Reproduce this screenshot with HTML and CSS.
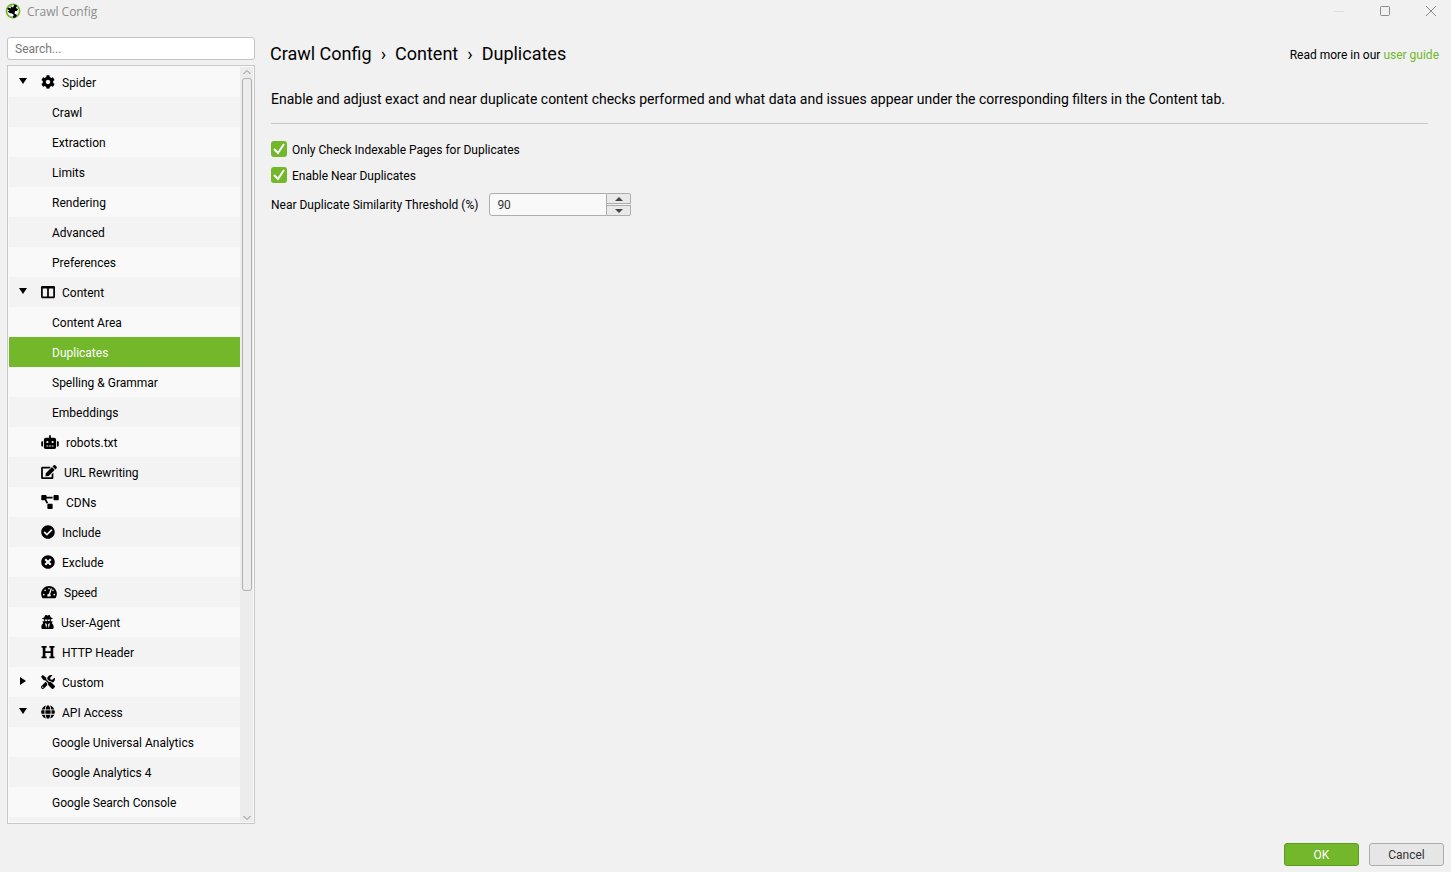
FILE: index.html
```html
<!DOCTYPE html>
<html lang="en">
<head>
  <meta charset="utf-8">
  <title>Crawl Config</title>
  <link rel="stylesheet" href="styles.css">
</head>
<body>
  <!-- title bar -->
  <header class="titlebar">
    <svg class="logo" viewBox="0 0 16 16">
      <circle cx="8" cy="8" r="6.6" fill="#fff" stroke="#6fb52c" stroke-width="1.6"/>
      <path d="M8 4.500L9.500 1.500 12 2.500 11 5 13 6 12 8 10 8 9.500 10.500 12 12 11 14 9 15 7.500 13.500 9 12 7 10.500 4.500 10 2.500 8.500 4.500 7.500 2 6 3.500 4.500 6 5.500 5.500 3z" fill="#000"/>
    </svg>
    <span class="window-title">Crawl Config</span>
    <div class="window-buttons">
      <button type="button" aria-label="Minimize" disabled><svg viewBox="0 0 12 12"><path d="M1 6.5h10"/></svg></button>
      <button type="button" aria-label="Maximize"><svg viewBox="0 0 12 12"><rect x="1.5" y="1.5" width="9" height="9" rx="1"/></svg></button>
      <button type="button" aria-label="Close"><svg viewBox="0 0 12 12"><path d="M1 1l10 10M11 1L1 11"/></svg></button>
    </div>
  </header>

  <div class="window">
    <!-- sidebar -->
    <nav class="sidebar">
      <input class="search" type="text" placeholder="Search..." aria-label="Search">
      <div class="tree">
        <ul class="tree-list">
          <li class="group open"><a href="#"><svg class="icon" viewBox="0 0 512 512"><path d="M487.4 315.7l-42.6-24.6c4.3-23.2 4.3-47 0-70.2l42.6-24.6c4.9-2.8 7.1-8.6 5.5-14-11.1-35.6-30-67.8-54.7-94.6-3.8-4.1-10-5.1-14.8-2.3L380.8 110c-17.9-15.4-38.5-27.3-60.8-35.1V25.8c0-5.6-3.9-10.5-9.4-11.7-36.7-8.2-74.3-7.8-109.2 0-5.5 1.2-9.4 6.1-9.4 11.7V75c-22.2 7.9-42.8 19.8-60.8 35.1L88.7 85.5c-4.9-2.8-11-1.9-14.8 2.3-24.7 26.7-43.6 58.9-54.7 94.6-1.7 5.4.6 11.2 5.5 14L67.3 221c-4.3 23.2-4.3 47 0 70.2l-42.6 24.6c-4.9 2.8-7.1 8.6-5.5 14 11.1 35.6 30 67.8 54.7 94.6 3.8 4.1 10 5.1 14.8 2.3l42.6-24.6c17.9 15.4 38.5 27.3 60.8 35.1v49.2c0 5.6 3.9 10.5 9.4 11.7 36.7 8.2 74.3 7.8 109.2 0 5.5-1.2 9.4-6.1 9.4-11.7v-49.2c22.2-7.9 42.8-19.8 60.8-35.1l42.6 24.6c4.9 2.8 11 1.9 14.8-2.3 24.7-26.7 43.6-58.9 54.7-94.6 1.5-5.5-.7-11.3-5.6-14.1zM256 336c-44.1 0-80-35.9-80-80s35.9-80 80-80 80 35.9 80 80-35.9 80-80 80z"/></svg>Spider</a></li>
          <li><a href="#">Crawl</a></li>
          <li><a href="#">Extraction</a></li>
          <li><a href="#">Limits</a></li>
          <li><a href="#">Rendering</a></li>
          <li><a href="#">Advanced</a></li>
          <li><a href="#">Preferences</a></li>
          <li class="group open"><a href="#"><svg class="icon" viewBox="0 0 512 512"><path d="M464 32H48C21.5 32 0 53.5 0 80v352c0 26.5 21.5 48 48 48h416c26.5 0 48-21.5 48-48V80c0-26.5-21.5-48-48-48zM224 416H64V128h160v288zm224 0H288V128h160v288z"/></svg>Content</a></li>
          <li><a href="#">Content Area</a></li>
          <li class="selected"><a href="#">Duplicates</a></li>
          <li><a href="#">Spelling &amp; Grammar</a></li>
          <li><a href="#">Embeddings</a></li>
          <li class="group"><a href="#"><svg class="icon icon-xl" viewBox="0 0 640 512"><path d="M32 224h32v192H32a32 32 0 0 1-32-32V256a32 32 0 0 1 32-32zm512-48v272a64 64 0 0 1-64 64H160a64 64 0 0 1-64-64V176a80 80 0 0 1 80-80h112V32a32 32 0 0 1 64 0v64h112a80 80 0 0 1 80 80zM264 256a40 40 0 1 0-40 40 40 40 0 0 0 40-40zm-8 128h-64v32h64zm96 0h-64v32h64zm104-128a40 40 0 1 0-40 40 40 40 0 0 0 40-40zm-8 128h-64v32h64zm192-128v128a32 32 0 0 1-32 32h-32V224h32a32 32 0 0 1 32 32z"/></svg>robots.txt</a></li>
          <li class="group"><a href="#"><svg class="icon icon-lg" viewBox="0 0 576 512"><path d="M402.6 83.2l90.2 90.2c3.8 3.8 3.8 10 0 13.8L274.4 405.6l-92.8 10.3c-12.4 1.4-22.9-9.1-21.5-21.5l10.3-92.8L388.8 83.2c3.8-3.8 10-3.8 13.8 0zm162-22.9l-48.8-48.8c-15.2-15.2-39.9-15.2-55.2 0l-35.4 35.4c-3.8 3.8-3.8 10 0 13.8l90.2 90.2c3.8 3.8 10 3.8 13.8 0l35.4-35.4c15.2-15.3 15.2-40 0-55.2zM384 346.2V448H64V128h229.8c3.2 0 6.2-1.3 8.5-3.5l40-40c7.6-7.6 2.2-20.5-8.5-20.5H48C21.5 64 0 85.5 0 112v352c0 26.5 21.5 48 48 48h352c26.5 0 48-21.5 48-48V306.2c0-10.7-12.9-16-20.5-8.5l-40 40c-2.2 2.3-3.5 5.3-3.5 8.5z"/></svg>URL Rewriting</a></li>
          <li class="group"><a href="#"><svg class="icon icon-xl" viewBox="0 0 640 512"><path d="M384 320H256c-17.7 0-32 14.3-32 32v128c0 17.7 14.3 32 32 32h128c17.7 0 32-14.3 32-32V352c0-17.7-14.3-32-32-32zM192 32c0-17.7-14.3-32-32-32H32C14.3 0 0 14.3 0 32v128c0 17.7 14.3 32 32 32h95.7l73.2 128C212 301 232.4 288 256 288h.3L192 175.5V128h224V64H192V32zM608 0H480c-17.7 0-32 14.3-32 32v128c0 17.7 14.3 32 32 32h128c17.7 0 32-14.3 32-32V32c0-17.7-14.3-32-32-32z"/></svg>CDNs</a></li>
          <li class="group"><a href="#"><svg class="icon" viewBox="0 0 512 512"><path d="M504 256c0 137-111 248-248 248S8 393 8 256 119 8 256 8s248 111 248 248zM227.3 387.3l184-184c6.2-6.2 6.2-16.4 0-22.6l-22.6-22.6c-6.3-6.3-16.4-6.3-22.6 0L216 308.1l-70.1-70.1c-6.2-6.2-16.4-6.2-22.6 0l-22.6 22.6c-6.3 6.3-6.3 16.4 0 22.7l104 104c6.2 6.2 16.4 6.2 22.6 0z"/></svg>Include</a></li>
          <li class="group"><a href="#"><svg class="icon" viewBox="0 0 512 512"><path d="M256 8C119 8 8 119 8 256s111 248 248 248 248-111 248-248S393 8 256 8zm121.6 313.1c4.7 4.7 4.7 12.3 0 17L338 377.6c-4.7 4.7-12.3 4.7-17 0L256 312l-65.1 65.6c-4.7 4.7-12.3 4.7-17 0L134.4 338c-4.7-4.7-4.7-12.3 0-17l65.6-65-65.6-65.1c-4.7-4.7-4.7-12.3 0-17l39.6-39.6c4.7-4.7 12.3-4.7 17 0l65 65.7 65.1-65.6c4.7-4.7 12.3-4.7 17 0l39.6 39.6c4.7 4.7 4.7 12.3 0 17L312 256l65.6 65.1z"/></svg>Exclude</a></li>
          <li class="group"><a href="#"><svg class="icon icon-lg" viewBox="0 0 576 512"><path d="M288 32C128.9 32 0 160.9 0 320c0 52.8 14.3 102.3 39.1 144.8 5.6 9.6 16.3 15.2 27.4 15.2h443c11.1 0 21.8-5.6 27.4-15.2C561.8 422.3 576 372.8 576 320c0-159.1-128.9-288-288-288zm0 64c14.7 0 26.6 10.1 30.3 23.7-1.1 2.3-2.6 4.2-3.5 6.7l-9.2 27.7c-5.1 3.5-11 6-17.6 6-17.7 0-32-14.3-32-32S270.3 96 288 96zM96 384c-17.7 0-32-14.3-32-32s14.3-32 32-32 32 14.3 32 32-14.3 32-32 32zm48-160c-17.7 0-32-14.3-32-32s14.3-32 32-32 32 14.3 32 32-14.3 32-32 32zm246.8-72.4l-61.3 184C343.1 347.3 352 364.5 352 384c0 11.7-3.4 22.6-8.9 32H232.9c-5.5-9.5-8.9-20.3-8.9-32 0-33.9 26.5-61.4 59.9-63.6l61.3-184c4.2-12.6 17.7-19.5 30.4-15.2 12.6 4.2 19.4 17.8 15.2 30.4zm14.6 57.2l15.5-46.6c3.5-1.3 7.1-2.2 11.1-2.2 17.7 0 32 14.3 32 32s-14.3 32-32 32c-11.4 0-20.9-6.3-26.6-15.2zM480 384c-17.7 0-32-14.3-32-32s14.3-32 32-32 32 14.3 32 32-14.3 32-32 32z"/></svg>Speed</a></li>
          <li class="group"><a href="#"><svg class="icon icon-sm" viewBox="0 0 448 512"><path d="M383.9 308.3l23.9-62.6c4-10.5-3.7-21.7-15-21.7h-58.5c11-18.9 17.8-40.6 17.8-64v-.3c39.2-7.8 64-19.1 64-31.7 0-13.3-27.3-25.1-70.1-33-9.2-32.8-27-65.8-40.6-82.8-9.5-11.9-25.9-15.6-39.5-8.8l-27.6 13.8c-9 4.5-19.6 4.5-28.6 0L182.1 3.4c-13.6-6.8-30-3.1-39.5 8.8-13.5 17-31.4 50-40.6 82.8-42.7 7.9-70 19.7-70 33 0 12.6 24.8 23.9 64 31.7v.3c0 23.4 6.8 45.1 17.8 64H56.3c-11.5 0-19.2 11.7-14.7 22.3l25.8 60.2C27.3 329.8 0 372.7 0 422.4v44.8C0 491.9 20.1 512 44.8 512h358.4c24.7 0 44.8-20.1 44.8-44.8v-44.8c0-48.4-25.8-90.4-64.1-114.1zM176 480l-41.6-192 49.6 32 24 40-32 120zm96 0l-32-120 24-40 49.6-32L272 480zm41.7-298.5c-3.9 11.9-7 24.6-16.5 33.4-10.1 9.3-48 22.4-64-25-2.8-8.4-15.4-8.4-18.3 0-17 50.2-56 32.4-64 25-9.5-8.8-12.7-21.5-16.5-33.4-.8-2.5-6.3-5.7-6.3-5.8v-10.8c28.3 3.6 61 5.8 96 5.8s67.7-2.1 96-5.8v10.8c-.1.1-5.6 3.2-6.4 5.8z"/></svg>User-Agent</a></li>
          <li class="group"><a href="#"><svg class="icon" viewBox="0 0 512 512"><path d="M448 96v320h32a16 16 0 0 1 16 16v32a16 16 0 0 1-16 16H320a16 16 0 0 1-16-16v-32a16 16 0 0 1 16-16h32V288H160v128h32a16 16 0 0 1 16 16v32a16 16 0 0 1-16 16H32a16 16 0 0 1-16-16v-32a16 16 0 0 1 16-16h32V96H32a16 16 0 0 1-16-16V48a16 16 0 0 1 16-16h160a16 16 0 0 1 16 16v32a16 16 0 0 1-16 16h-32v128h192V96h-32a16 16 0 0 1-16-16V48a16 16 0 0 1 16-16h160a16 16 0 0 1 16 16v32a16 16 0 0 1-16 16z"/></svg>HTTP Header</a></li>
          <li class="group closed"><a href="#"><svg class="icon" viewBox="0 0 512 512"><path d="M501.1 395.7L384 278.6c-23.1-23.1-57.6-27.6-85.4-13.9L192 158.1V96L64 0 0 64l96 128h62.1l106.6 106.6c-13.6 27.8-9.2 62.3 13.9 85.4l117.1 117.1c14.6 14.6 38.2 14.6 52.7 0l52.7-52.7c14.5-14.6 14.5-38.2 0-52.7zM331.7 225c28.3 0 54.9 11 74.9 31l19.4 19.4c15.8-6.9 30.8-16.5 43.8-29.5 37.1-37.1 49.7-89.3 37.9-136.7-2.2-9-13.5-12.1-20.1-5.5l-74.4 74.4-67.9-11.3L334 98.9l74.4-74.4c6.6-6.6 3.4-17.9-5.7-20.2-47.4-11.7-99.6.9-136.6 37.9-28.5 28.5-41.9 66.1-41.2 103.6l82.1 82.1c8.1-1.9 16.5-2.9 24.7-2.9zm-103.9 82l-56.7-56.7L18.7 402.8c-25 25-25 65.5 0 90.5s65.5 25 90.5 0l123.6-123.6c-7.6-19.9-9.9-41.6-5-62.7zM64 472c-13.2 0-24-10.8-24-24 0-13.3 10.7-24 24-24s24 10.7 24 24c0 13.2-10.7 24-24 24z"/></svg>Custom</a></li>
          <li class="group open"><a href="#"><svg class="icon" viewBox="0 0 496 512"><path d="M336.5 160C322 70.7 287.8 8 248 8s-74 62.7-88.5 152h177zM152 256c0 22.2 1.2 43.5 3.3 64h185.3c2.1-20.5 3.3-41.8 3.3-64s-1.2-43.5-3.3-64H155.3c-2.1 20.5-3.3 41.8-3.3 64zm324.7-96c-28.6-67.9-86.5-120.4-158-141.6 24.4 33.8 41.2 84.7 50 141.6h108zM177.2 18.4C105.8 39.6 47.8 92.1 19.3 160h108c8.7-56.9 25.5-107.8 49.9-141.6zM487.4 192H372.7c2.1 21 3.3 42.5 3.3 64s-1.2 43-3.3 64h114.6c5.5-20.5 8.6-41.8 8.6-64s-3.1-43.5-8.5-64zM120 256c0-21.5 1.2-43 3.3-64H8.6C3.2 212.5 0 233.8 0 256s3.2 43.5 8.6 64h114.6c-2-21-3.2-42.5-3.2-64zm39.5 96c14.5 89.3 48.7 152 88.5 152s74-62.7 88.5-152h-177zm159.3 141.6c71.4-21.2 129.4-73.7 158-141.6h-108c-8.8 56.9-25.6 107.8-50 141.6zM19.3 352c28.6 67.9 86.5 120.4 158 141.6-24.4-33.8-41.2-84.7-50-141.6h-108z"/></svg>API Access</a></li>
          <li><a href="#">Google Universal Analytics</a></li>
          <li><a href="#">Google Analytics 4</a></li>
          <li><a href="#">Google Search Console</a></li>
          <li></li>
        </ul>
        <div class="scrollbar">
          <svg class="scroll-arrow" viewBox="0 0 10 10"><path d="M1.500 6.500l3.500-3.500 3.500 3.500"/></svg>
          <div class="scroll-track"><div class="scroll-thumb"></div></div>
          <svg class="scroll-arrow" viewBox="0 0 10 10"><path d="M1.500 4.500l3.500 3.500 3.500-3.500"/></svg>
        </div>
      </div>
    </nav>

    <!-- settings panel -->
    <main class="content">
      <div class="content-header">
        <h1><span>Crawl Config</span><span>›</span><span>Content</span><span>›</span><span>Duplicates</span></h1>
        <p class="guide">Read more in our <a href="#">user guide</a></p>
      </div>
      <p class="description">Enable and adjust exact and near duplicate content checks performed and what data and issues appear under the corresponding filters in the Content tab.</p>
      <form class="options">
        <label class="check"><input type="checkbox" checked>Only Check Indexable Pages for Duplicates</label>
        <label class="check"><input type="checkbox" checked>Enable Near Duplicates</label>
        <div class="threshold">
          <label for="threshold">Near Duplicate Similarity Threshold (%)</label>
          <div class="spinner">
            <input id="threshold" type="text" value="90">
            <div class="spin-buttons">
              <button type="button" aria-label="Increase"><svg viewBox="0 0 8 4"><path d="M0 4l4-4 4 4z"/></svg></button>
              <button type="button" aria-label="Decrease"><svg viewBox="0 0 8 4"><path d="M0 0l4 4 4-4z"/></svg></button>
            </div>
          </div>
        </div>
      </form>
    </main>
  </div>

  <footer class="actions">
    <button type="button" class="btn btn-ok">OK</button>
    <button type="button" class="btn">Cancel</button>
  </footer>
</body>
</html>
```
FILE: styles.css
```css
* {
  box-sizing: border-box;
}

body {
  margin: 0;
  height: 100vh;
  display: flex;
  flex-direction: column;
  background-color: #f1f1f1;
  color: #000;
  font-family: Roboto, "Liberation Sans", sans-serif;
  font-size: 12px;
  line-height: 16px;
}

button,
input {
  font: inherit;
}

/* title bar */
.titlebar {
  display: flex;
  align-items: center;
  height: 24px;
  padding-left: 5px;
  flex-shrink: 0;
}

.logo {
  width: 16px;
  height: 16px;
  margin-bottom: 2px;
}

.window-title {
  margin-left: 6px;
  color: #8c8c8c;
  font-family: "Open Sans", "Noto Sans", sans-serif;
}

.window-buttons {
  display: flex;
  gap: 6px;
  margin-left: auto;
}

.window-buttons button {
  width: 40px;
  height: 24px;
  padding: 0 0 2px;
  border: none;
  background: none;
  display: flex;
  align-items: center;
  justify-content: center;
}

.window-buttons svg {
  width: 12px;
  height: 12px;
  fill: none;
  stroke: #8c8c8c;
}

.window-buttons button:disabled svg {
  stroke: #dcdcdc;
}

.window {
  flex: 1;
  min-height: 0;
  display: flex;
  gap: 15px;
  padding: 13px 12px 0 7px;
}

/* sidebar */
.sidebar {
  width: 248px;
  flex-shrink: 0;
  display: flex;
  flex-direction: column;
  gap: 5px;
}

.search {
  height: 23px;
  padding: 0 7px;
  border: 1px solid #c4c4c4;
  border-radius: 3px;
  background-color: #fff;
}

.search::placeholder {
  color: #777;
}

.tree {
  flex: 1;
  min-height: 0;
  display: flex;
  padding: 1px;
  border: 1px solid #c8c8c8;
  background-color: #f9f9f9;
}

.tree-list {
  flex: 1;
  margin: 0;
  padding: 0;
  list-style: none;
  overflow: hidden;
}

.tree-list li {
  display: flex;
  align-items: center;
  height: 30px;
  padding-left: 43px;
}

.tree-list li:nth-child(even) {
  background-color: #f3f3f3;
}

.tree-list a {
  display: flex;
  gap: 7px;
  padding-top: 2px;
  color: #000;
  text-decoration: none;
}

.tree-list li.group {
  padding-left: 32px;
}

.tree-list li.selected {
  background-color: #73b72b;
}

.tree-list li.selected a {
  color: #fff;
}

/* expand arrows */
.tree-list li.open,
.tree-list li.closed {
  padding-left: 10px;
}

.open::before,
.closed::before {
  content: "";
  width: 8px;
  height: 6px;
  margin: 0 14px 2px 0;
  background-color: #000;
  clip-path: polygon(0 0, 100% 0, 50% 100%);
}

.closed::before {
  width: 6px;
  height: 8px;
  margin: 0 15px 2px 1px;
  clip-path: polygon(0 0, 100% 50%, 0 100%);
}

.icon {
  width: 14px;
  height: 14px;
}

.icon-sm {
  width: 13px;
}

.icon-lg {
  width: 16px;
}

.icon-xl {
  width: 18px;
}

/* scroll bar */
.scrollbar {
  width: 13px;
  display: flex;
  flex-direction: column;
  align-items: flex-end;
  padding-right: 1px;
  background-color: #ececec;
}

.scroll-arrow {
  width: 10px;
  height: 11px;
  fill: none;
  stroke: #8a8a8a;
}

.scroll-track {
  flex: 1;
}

.scroll-thumb {
  width: 10px;
  height: 70%;
  border: 1px solid #b0b0b0;
  border-radius: 3px;
  background-color: #ececec;
}

/* content */
.content {
  flex: 1;
  min-width: 0;
}

.content-header {
  display: flex;
  align-items: center;
  justify-content: space-between;
  margin-top: 5px;
}

h1 {
  display: flex;
  gap: 9px;
  margin: 0;
  font-size: 18px;
  font-weight: 400;
  line-height: 24px;
}

.guide {
  margin: 0;
  padding-top: 2px;
}

.guide a {
  color: #73b72b;
  text-decoration: none;
}

.description {
  margin: 23px 11px 17px 1px;
  padding-bottom: 14px;
  border-bottom: 1px solid #c8c8c8;
  font-size: 14px;
  line-height: 20px;
}

.options {
  display: flex;
  flex-direction: column;
  gap: 8px;
  padding-left: 1px;
}

.check {
  display: flex;
  gap: 5px;
  align-self: flex-start;
  line-height: 18px;
}

.check input {
  appearance: none;
  width: 16px;
  height: 16px;
  margin: 0;
  border-radius: 3px;
  background: #73b72b;
}

.check input:checked {
  background: #73b72b url("data:image/svg+xml,%3Csvg xmlns='http://www.w3.org/2000/svg' viewBox='0 0 16 16'%3E%3Cpath d='M3 8l4 4 6-9' fill='none' stroke='white' stroke-width='2'/%3E%3C/svg%3E");
}

.threshold {
  display: flex;
  align-items: center;
  gap: 11px;
}

.spinner {
  display: flex;
  width: 142px;
  height: 23px;
}

.spinner input {
  flex: 1;
  min-width: 0;
  padding: 0 7px;
  border: 1px solid #adadad;
  border-radius: 3px 0 0 3px;
  background-color: #f9f9f9;
  color: #333;
}

.spin-buttons {
  width: 24px;
  display: flex;
  flex-direction: column;
  gap: 1px;
}

.spin-buttons button {
  flex: 1;
  display: flex;
  align-items: center;
  justify-content: center;
  padding: 0;
  border: 1px solid #adadad;
  border-left: none;
  border-radius: 0 2px 0 0;
  background-color: #e9e9e9;
}

.spin-buttons button:last-child {
  border-radius: 0 0 2px 0;
}

.spin-buttons svg {
  width: 8px;
  height: 4px;
  fill: #444;
}

/* footer buttons */
.actions {
  display: flex;
  justify-content: flex-end;
  gap: 10px;
  padding: 19px 7px 6px;
  flex-shrink: 0;
}

.btn {
  width: 75px;
  height: 23px;
  padding: 0;
  border: 1px solid #adadad;
  border-radius: 3px;
  background-color: #e6e6e6;
  color: #333;
}

.btn-ok {
  border-color: #5a9a1c;
  background-color: #73b72b;
  color: #fff;
}
```
